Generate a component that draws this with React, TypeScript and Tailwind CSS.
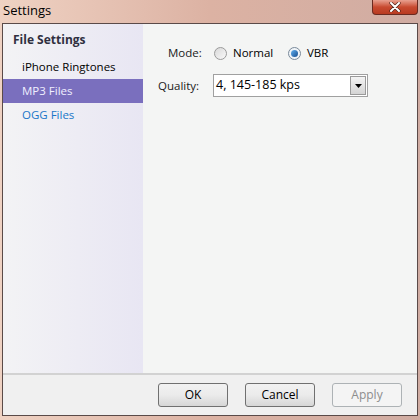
export default function App() {
  return (
    <div className="w-[420px] h-[420px] flex flex-col bg-gradient-to-r from-[#efd2c3] via-[#dcb2a3] to-[#d0aca2] font-['Open_Sans','Noto_Sans',sans-serif] text-[12px] text-black overflow-hidden">
      {/* title bar */}
      <div className="h-[23px] flex items-start justify-between shrink-0">
        <span className="pl-[3px] pt-[1px] text-[13px] text-black">Settings</span>
        <div className="mr-[2px] w-[46px] h-[15px] rounded-b-[4px] border border-[#6a2a20] border-t-0 bg-gradient-to-b from-[#e8a090] via-[#c84a30] to-[#b83a20] flex items-center justify-center">
          <svg width="12" height="10" viewBox="0 0 12 10">
            <path d="M2 1 L10 9 M10 1 L2 9" stroke="#4a2018" strokeWidth="3.2" strokeLinecap="round" />
            <path d="M2 1 L10 9 M10 1 L2 9" stroke="#ffffff" strokeWidth="2" strokeLinecap="round" />
          </svg>
        </div>
      </div>

      {/* client area */}
      <div className="mx-[2px] mb-[4px] flex-1 flex flex-col border border-[#5a4a48] bg-[#f0f0f0]">
        <div className="flex-1 flex">
          <div className="w-[140px] bg-gradient-to-r from-[#f3f3f5] to-[#e8e6f3] pt-[7px] flex flex-col text-[11.5px]">
            <div className="pl-[10px] h-[18px] font-bold text-[#303040] text-[12px]">File Settings</div>
            <div className="h-[6px]" />
            <div className="pl-[19px] h-[24px] flex items-center text-black">iPhone Ringtones</div>
            <div className="pl-[19px] h-[24px] flex items-center bg-[#7a6fbe] text-[#f0f0ff]">MP3 Files</div>
            <div className="pl-[19px] h-[23px] flex items-center text-[#1a76c8]">OGG Files</div>
          </div>
          <div className="flex-1 bg-[#f4f5f4] pt-[19px] pl-[15px] flex flex-col text-[11.5px]">
            <div className="flex items-center h-[20px]">
              <span className="ml-[10px] w-[46px] text-[#202020]">Mode:</span>
              <span className="w-[13px] h-[13px] rounded-full border border-[#9a9a9a] bg-gradient-to-br from-[#d8d8d8] to-[#fafafa]" />
              <span className="ml-[6px] w-[55px]">Normal</span>
              <span className="w-[13px] h-[13px] rounded-full border border-[#7a8a9a] bg-[#f0f4f8] flex items-center justify-center">
                <span className="w-[7px] h-[7px] rounded-full bg-gradient-to-br from-[#60b0f0] to-[#1a4f90]" />
              </span>
              <span className="ml-[6px]">VBR</span>
            </div>
            <div className="flex items-center h-[23px] mt-[11px]">
              <span className="w-[55px] text-[#202020]">Quality:</span>
              <div className="w-[155px] h-[23px] border border-[#a0a0a0] bg-white flex items-center">
                <span className="flex-1 pl-[2px] text-[12.5px]">4, 145-185 kps</span>
                <div className="w-[16px] h-[19px] mr-[1px] border border-[#9a9a9a] bg-gradient-to-b from-[#f4f4f4] to-[#d4d4d4] flex items-center justify-center">
                  <svg width="7" height="4" viewBox="0 0 7 4"><path d="M0 0 L7 0 L3.5 4 Z" fill="#000" /></svg>
                </div>
              </div>
            </div>
          </div>
        </div>
        <div className="h-[42px] border-t-2 border-[#d2d2d2] bg-[#f0f0f0] flex items-center justify-end gap-[17px] pr-[15px]">
          <button className="w-[70px] h-[24px] rounded-[3px] border border-[#707070] bg-gradient-to-b from-[#f2f2f2] via-[#ebebeb] to-[#d6d6d6] text-[12px]">OK</button>
          <button className="w-[70px] h-[24px] rounded-[3px] border border-[#707070] bg-gradient-to-b from-[#f2f2f2] via-[#ebebeb] to-[#d6d6d6] text-[12px]">Cancel</button>
          <button className="w-[70px] h-[24px] rounded-[3px] border border-[#adb2b5] bg-[#f4f4f4] text-[12px] text-[#8d8d8d]">Apply</button>
        </div>
      </div>
    </div>
  );
}
